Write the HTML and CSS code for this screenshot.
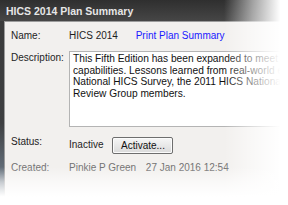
FILE: index.html
```html
<!DOCTYPE html>
<html>
<head>
  <title>HICS 2014 Plan Summary</title>
  <link rel="stylesheet" href="styles.css">
</head>
<body>
  <div class="window">
    <div class="titlebar">HICS 2014 Plan Summary</div>
    <div class="panel">
      <div class="label">Name:</div>
      <div class="value">HICS 2014 <a href="#" class="link">Print Plan Summary</a></div>

      <div class="label desc-label">Description:</div>
      <div class="textbox">
        This Fifth Edition has been expanded to meet the<br>
        capabilities. Lessons learned from real-world events<br>
        National HICS Survey, the 2011 HICS National Summit<br>
        Review Group members.
      </div>

      <div class="label">Status:</div>
      <div class="value status">Inactive <button>Activate...</button></div>

      <div class="label muted">Created:</div>
      <div class="value muted">Pinkie P Green <span class="date">27 Jan 2016 12:54</span></div>
    </div>
    <div class="fade-right"></div>
    <div class="fade-bottom"></div>
  </div>
</body>
</html>
```

FILE: styles.css
```css
html, body {
  margin: 0;
  width: 288px;
  height: 205px;
  overflow: hidden;
  background: #fff;
}

body {
  font-family: "Liberation Sans", Arial, sans-serif;
  font-size: 10px;
  color: #1e1e1e;
}

.window {
  position: relative;
  height: 205px;
  background: linear-gradient(to bottom, #3a3a3a 0%, #3e3f41 60%, #66727e 85%, #9aa4ae 100%);
}

.titlebar {
  height: 21px;
  line-height: 23px;
  padding-left: 6px;
  font-size: 10.5px;
  font-weight: bold;
  color: #e6e6e6;
  background: linear-gradient(to bottom, #2f2f2f, #464646);
  white-space: nowrap;
}

.panel {
  margin-left: 4px;
  height: 183px;
  border-top: 1px solid #9c9c9c;
  border-left: 1px solid #9c9c9c;
  background: #f2f0ee;
  padding: 8px 0 0 6px;
  display: grid;
  grid-template-columns: 58px 1fr;
  grid-template-rows: 12px 76px 17px 12px;
  row-gap: 9px;
  box-sizing: border-box;
  white-space: nowrap;
  overflow: hidden;
}

.label, .value {
  line-height: 12px;
}

.desc-label {
  padding-top: 1px;
}

.link {
  color: #1a1aff;
  text-decoration: none;
  margin-left: 15px;
}

.textbox {
  background: #fff;
  border: 1px solid #b4b4b4;
  border-right: none;
  padding: 1px 3px;
  line-height: 11.7px;
  font-size: 10.2px;
  color: #111;
  overflow: hidden;
}

.status {
  display: flex;
  align-items: center;
  gap: 9px;
  margin-top: 1px;
}

button {
  font-family: "Liberation Sans", Arial, sans-serif;
  font-size: 10px;
  color: #111;
  width: 61px;
  height: 17px;
  padding: 0;
  border: 1px solid #6e6e6e;
  border-radius: 2px;
  background: linear-gradient(to bottom, #f6f6f6, #dadada);
  box-shadow: inset 0 0 0 1px #fbfbfb;
}

.muted {
  color: #727272;
}

.date {
  margin-left: 7px;
}

.fade-right {
  position: absolute;
  top: 0;
  right: 0;
  width: 64px;
  height: 100%;
  background: linear-gradient(to right, rgba(255,255,255,0) 0%, rgba(255,255,255,0.55) 45%, #fff 88%);
}

.fade-bottom {
  position: absolute;
  left: 0;
  bottom: 0;
  width: 100%;
  height: 38px;
  background: linear-gradient(to bottom, rgba(255,255,255,0) 0%, rgba(255,255,255,0.6) 40%, #fff 78%);
}
```
